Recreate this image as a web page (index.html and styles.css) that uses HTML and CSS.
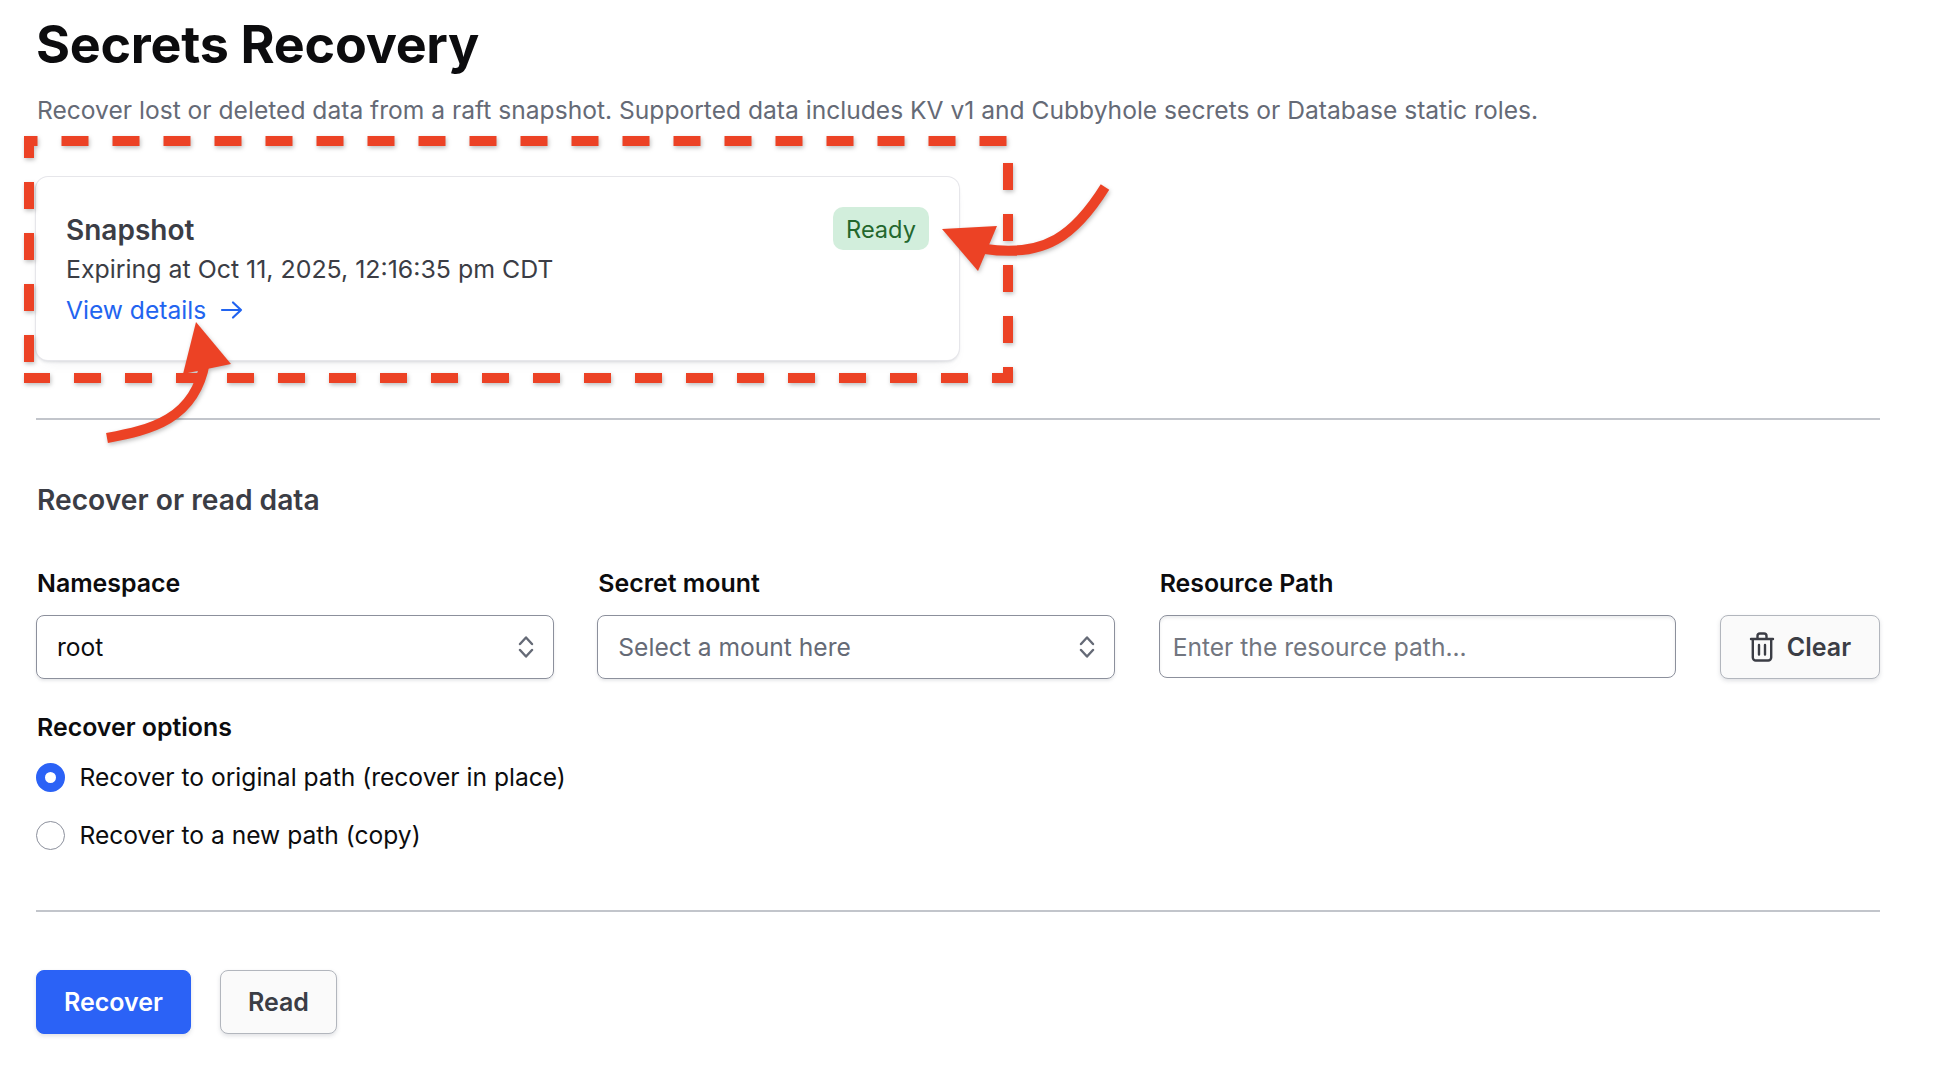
FILE: index.html
```html
<!DOCTYPE html>
<html lang="en">
<head>
    <meta charset="UTF-8">
    <title>Secrets Recovery</title>
    <link rel="stylesheet" href="styles.css">
</head>
<body>
    <h1>Secrets Recovery</h1>
    <p class="subtitle">Recover lost or deleted data from a raft snapshot. Supported data includes KV v1 and Cubbyhole secrets or Database static roles.</p>

    <div class="card">
        <div class="card_text">
            <h3>Snapshot</h3>
            <p>Expiring at Oct 11, 2025, 12:16:35 pm CDT</p>
            <a href="#" class="details">View details
                <svg width="24" height="20" viewBox="0 0 24 20" fill="none" stroke="#2264f0" stroke-width="2.2" stroke-linecap="round" stroke-linejoin="round"><path d="M3 10h19M14 2.5l8 7.5-8 7.5"/></svg>
            </a>
        </div>
        <span class="badge">Ready</span>
    </div>

    <hr class="rule_one">

    <h2>Recover or read data</h2>

    <div class="fields">
        <div class="field">
            <label>Namespace</label>
            <div class="select">
                <span>root</span>
                <svg width="16" height="22" viewBox="0 0 16 22" fill="none" stroke="#656a76" stroke-width="2.4" stroke-linecap="round" stroke-linejoin="round"><path d="M2 8l6-6.5L14 8M2 14l6 6.5 6-6.5"/></svg>
            </div>
        </div>
        <div class="field">
            <label>Secret mount</label>
            <div class="select placeholder">
                <span>Select a mount here</span>
                <svg width="16" height="22" viewBox="0 0 16 22" fill="none" stroke="#656a76" stroke-width="2.4" stroke-linecap="round" stroke-linejoin="round"><path d="M2 8l6-6.5L14 8M2 14l6 6.5 6-6.5"/></svg>
            </div>
        </div>
        <div class="field">
            <label>Resource Path</label>
            <input type="text" class="text_input" placeholder="Enter the resource path...">
        </div>
        <button class="btn clear">
            <svg width="26" height="30" viewBox="0 0 26 30" fill="none" stroke="#3b3d45" stroke-width="2.4" stroke-linecap="round" stroke-linejoin="round"><path d="M2 7h22M8.5 7V4a2.5 2.5 0 0 1 2.5-2.5h4A2.5 2.500 0 0 1 17.5 4v3M3.800 7v18.500a3 3 0 0 0 3 3h12.400a3 3 0 0 0 3-3V7M10 13v9.500M16 13v9.500"/></svg>
            Clear
        </button>
    </div>

    <h4>Recover options</h4>
    <label class="radio_row"><input type="radio" name="mode" checked> Recover to original path (recover in place)</label>
    <label class="radio_row second"><input type="radio" name="mode"> Recover to a new path (copy)</label>

    <hr class="rule_two">

    <div class="actions">
        <button class="btn primary">Recover</button>
        <button class="btn">Read</button>
    </div>

    <!-- red annotations drawn on top of the screenshot -->
    <svg class="marks" width="1944" height="1088" viewBox="0 0 1944 1088" fill="none" stroke="#ec4225">
        <g stroke-width="10">
            <path d="M24 141H1007" stroke-dasharray="27 24" stroke-dashoffset="13.5"/>
            <path d="M29 136V363" stroke-dasharray="27 24" stroke-dashoffset="5"/>
            <path d="M24 378H1013" stroke-dasharray="27 24" stroke-dashoffset="1"/>
            <path d="M1008 163V383" stroke-dasharray="27 24"/>
            <path d="M107 438C150 430 195 420 205 362"/>
            <path d="M1105 187C1075 235 1045 258 985 249"/>
        </g>
        <path d="M196 322L231 364L183 374Z" fill="#ec4225" stroke="none"/>
        <path d="M942 229L997 226L978 271Z" fill="#ec4225" stroke="none"/>
    </svg>
</body>
</html>
```

FILE: styles.css
```css
body {
    font-family: Inter, "Liberation Sans", sans-serif;
    margin: 0;
    padding: 0 64px 0 36px;
    background-color: white;
    color: #0c0c0e;
    position: relative;
    height: 1088px;
    box-sizing: border-box;
    overflow: hidden;
}

h1 {
    font-size: 52px;
    font-weight: 700;
    line-height: 60px;
    margin: 15px 0 0 0;
    letter-spacing: -0.25px;
}

.subtitle {
    font-size: 24.6px;
    line-height: 32px;
    margin: 19px 0 0 1px;
    color: #656a76;
}

.card {
    width: 923px;
    height: 183px;
    margin-top: 51px;
    padding: 30px;
    box-sizing: border-box;
    display: flex;
    justify-content: space-between;
    align-items: flex-start;
    background-color: white;
    border-radius: 12px;
    box-shadow: 0 0 0 1px #e6e6ea, 0 2px 3px rgba(101, 106, 118, 0.2), 0 8px 16px -10px rgba(101, 106, 118, 0.2);
}

.card h3 {
    font-size: 28px;
    font-weight: 600;
    line-height: 34px;
    margin: 6px 0 0 0;
    color: #3b3d45;
}

.card p {
    font-size: 24.9px;
    line-height: 32px;
    margin: 6px 0 0 0;
    color: #3b3d45;
}

.details {
    display: flex;
    align-items: center;
    gap: 13px;
    font-size: 24.6px;
    line-height: 32px;
    margin-top: 9px;
    color: #2264f0;
    text-decoration: none;
}

.badge {
    width: 96px;
    height: 43px;
    padding-top: 1px;
    box-sizing: border-box;
    display: flex;
    align-items: center;
    justify-content: center;
    font-size: 23.6px;
    color: #23672d;
    background-color: #d2eedc;
    border-radius: 10px;
}

hr {
    border: none;
    height: 2px;
    margin: 0;
    background-color: #c2c5cb;
}

.rule_one {
    margin-top: 58px;
}

h2 {
    font-size: 28.2px;
    font-weight: 600;
    line-height: 34px;
    margin: 63px 0 0 1px;
    color: #3b3d45;
}

.fields {
    display: grid;
    grid-template-columns: 1fr 1fr 1fr 160px;
    column-gap: 43.5px;
    align-items: end;
    margin-top: 51px;
}

.field label {
    display: block;
    font-size: 24.9px;
    font-weight: 600;
    line-height: 30px;
    margin: 0 0 17px 1px;
}

.select {
    height: 64px;
    box-sizing: border-box;
    display: flex;
    align-items: center;
    justify-content: space-between;
    padding: 0 19px 0 20px;
    font-size: 24.6px;
    border: 1.5px solid #8c909c;
    border-radius: 8px;
    box-shadow: 0 2px 3px rgba(101, 106, 118, 0.15);
}

.placeholder {
    color: #656a76;
}

.text_input {
    width: 100%;
    height: 63px;
    margin-bottom: 1px;
    box-sizing: border-box;
    display: block;
    padding: 0 13px;
    font-family: inherit;
    font-size: 24.6px;
    border: 1.5px solid #8c909c;
    border-radius: 8px;
    box-shadow: inset 0 2px 3px rgba(101, 106, 118, 0.12);
}

.text_input::placeholder {
    color: #72767f;
}

.btn {
    height: 64px;
    box-sizing: border-box;
    display: flex;
    align-items: center;
    justify-content: center;
    font-family: inherit;
    font-size: 25px;
    font-weight: 600;
    color: #3b3d45;
    background-color: #fafafa;
    border: 1.5px solid #b2b6bd;
    border-radius: 8px;
    box-shadow: 0 2px 4px rgba(101, 106, 118, 0.2);
}

.clear {
    gap: 12px;
}

h4 {
    font-size: 24.9px;
    font-weight: 600;
    line-height: 30px;
    margin: 33px 0 0 1px;
}

.radio_row {
    display: flex;
    align-items: center;
    gap: 14.5px;
    font-size: 24.6px;
    line-height: 32px;
    margin-top: 19px;
}

.radio_row.second {
    margin-top: 26px;
}

.radio_row input {
    appearance: none;
    width: 29px;
    height: 29px;
    margin: 0;
    background-color: white;
    border: 1.5px solid #8c909c;
    border-radius: 50%;
}

.radio_row input:checked {
    border: 9.5px solid #2b62f6;
}

.rule_two {
    margin-top: 59px;
}

.actions {
    display: flex;
    gap: 29px;
    margin-top: 58px;
}

.actions .btn {
    width: 117px;
}

.actions .primary {
    width: 155px;
    color: white;
    background-color: #2b62f6;
    border-color: #2b62f6;
}

.marks {
    position: absolute;
    left: 0;
    top: 0;
    pointer-events: none;
    filter: drop-shadow(1px 2px 2px rgba(0, 0, 0, 0.25));
}
```
